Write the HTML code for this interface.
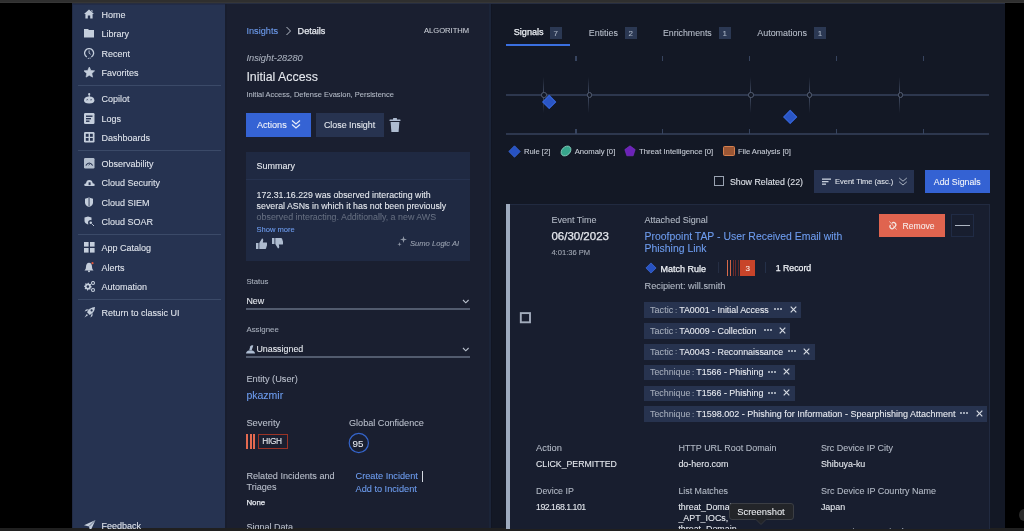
<!DOCTYPE html>
<html><head><meta charset="utf-8"><style>
html,body{margin:0;padding:0;width:1024px;height:531px;overflow:hidden;background:#000;}
body{position:relative;font-family:"Liberation Sans",sans-serif;}
.t{position:absolute;white-space:nowrap;-webkit-text-stroke:0.08px currentColor;}
.r{position:absolute;display:block;}
#w{position:absolute;left:0;top:0;width:1024px;height:531px;overflow:hidden;will-change:transform;}
</style></head><body><div id="w">
<div class="r" style="left:0px;top:0px;width:1024px;height:531px;background:#000;"></div>
<div class="r" style="left:0px;top:0px;width:1024px;height:3px;background:#2f2f2f;"></div>
<div class="r" style="left:72px;top:3px;width:933px;height:1px;background:#262d40;"></div>
<div class="r" style="left:0px;top:2px;width:1024px;height:1px;background:#363636;"></div>
<div class="r" style="left:72px;top:4px;width:153.3px;height:525px;background:#263351;"></div>
<div class="r" style="left:72px;top:4px;width:153.3px;height:1px;background:#222c48;"></div>
<div class="r" style="left:72px;top:4px;width:1px;height:525px;background:#212b45;"></div>
<div class="r" style="left:225.3px;top:4px;width:263.7px;height:525px;background:#1a1f30;"></div>
<div class="r" style="left:225.3px;top:4px;width:1.299999999999983px;height:525px;background:#181d2d;"></div>
<div class="r" style="left:489px;top:4px;width:2px;height:525px;background:#1b2438;"></div>
<div class="r" style="left:491px;top:4px;width:514px;height:525px;background:#131825;"></div>
<div class="r" style="left:491px;top:4px;width:1px;height:525px;background:#111522;"></div>
<div class="r" style="left:0px;top:528px;width:1024px;height:3px;background:#202020;"></div>
<div class="t" style="left:101.5px;top:10.20px;font-size:9px;line-height:10.80px;color:#dfe4ec;font-weight:400;font-style:normal;">Home</div>
<svg class="r" style="left:84px;top:9px;" width="12" height="12" viewBox="0 0 12 12"><path d="M5 0.5 L10 5 H8.6 V9.5 H6.2 V6.5 H3.8 V9.5 H1.4 V5 H0 Z M7.2 1.2 H8.5 V3.2 L7.2 2 Z" fill="#c4cedc"/></svg>
<div class="t" style="left:101.5px;top:29.20px;font-size:9px;line-height:10.80px;color:#dfe4ec;font-weight:400;font-style:normal;">Library</div>
<svg class="r" style="left:84px;top:28px;" width="12" height="12" viewBox="0 0 12 12"><path d="M0 1 H4 L5 2 H10 V9.5 H0 Z" fill="#c4cedc"/></svg>
<div class="t" style="left:101.5px;top:48.80px;font-size:9px;line-height:10.80px;color:#dfe4ec;font-weight:400;font-style:normal;">Recent</div>
<svg class="r" style="left:84px;top:48px;" width="12" height="12" viewBox="0 0 12 12"><path d="M2.85 9.0 A4.5 4.5 0 1 1 7.35 9.0" stroke="#c4cedc" stroke-width="1.3" fill="none"/><path d="M5.1 2.4 V5.2 L6.7 6.3" stroke="#c4cedc" stroke-width="0.9" fill="none"/><circle cx="4.3" cy="10.3" r="0.6" fill="#c4cedc"/><circle cx="6.1" cy="10.1" r="0.6" fill="#c4cedc"/></svg>
<div class="t" style="left:101.5px;top:68.00px;font-size:9px;line-height:10.80px;color:#dfe4ec;font-weight:400;font-style:normal;">Favorites</div>
<svg class="r" style="left:84px;top:67px;" width="12" height="12" viewBox="0 0 12 12"><path d="M5.30 0.00 L6.89 3.42 L10.63 3.87 L7.87 6.43 L8.59 10.13 L5.30 8.30 L2.01 10.13 L2.73 6.43 L-0.03 3.87 L3.71 3.42 Z" fill="#c4cedc" stroke="#c4cedc" stroke-width="0.6" stroke-linejoin="round"/></svg>
<div class="t" style="left:101.5px;top:93.75px;font-size:9px;line-height:10.80px;color:#dfe4ec;font-weight:400;font-style:normal;">Copilot</div>
<svg class="r" style="left:84px;top:93px;" width="12" height="12" viewBox="0 0 12 12"><circle cx="5.2" cy="1.2" r="1.1" fill="#c4cedc"/><rect x="4.7" y="1.5" width="1" height="2.5" fill="#c4cedc"/><path d="M0 7.5 Q0 3.5 5.2 3.5 Q10.4 3.5 10.4 7.5 Q10.4 10.5 5.2 10.5 Q0 10.5 0 7.5 Z" fill="#c4cedc"/><path d="M2.5 7 Q3.3 6 4.1 7 M6.3 7 Q7.1 6 7.9 7" stroke="#263351" stroke-width="0.8" fill="none"/></svg>
<div class="t" style="left:101.5px;top:113.50px;font-size:9px;line-height:10.80px;color:#dfe4ec;font-weight:400;font-style:normal;">Logs</div>
<svg class="r" style="left:84px;top:113px;" width="12" height="12" viewBox="0 0 12 12"><rect x="0" y="0" width="10.5" height="11" rx="1.2" fill="#c4cedc"/><rect x="2" y="2.5" width="6.5" height="1.4" fill="#263351"/><rect x="2" y="5" width="5" height="1.4" fill="#263351"/><rect x="2" y="7.5" width="3.5" height="1.4" fill="#263351"/></svg>
<div class="t" style="left:101.5px;top:133.00px;font-size:9px;line-height:10.80px;color:#dfe4ec;font-weight:400;font-style:normal;">Dashboards</div>
<svg class="r" style="left:84px;top:132px;" width="12" height="12" viewBox="0 0 12 12"><rect x="0" y="0" width="10.5" height="10.5" rx="1.2" fill="#c4cedc"/><rect x="1.8" y="1.8" width="2.8" height="3" fill="#263351"/><rect x="6" y="1.8" width="2.8" height="3" fill="#263351"/><rect x="1.8" y="6" width="2.8" height="2.8" fill="#263351"/><rect x="6" y="6" width="2.8" height="2.8" fill="#263351"/></svg>
<div class="t" style="left:101.5px;top:159.00px;font-size:9px;line-height:10.80px;color:#dfe4ec;font-weight:400;font-style:normal;">Observability</div>
<svg class="r" style="left:84px;top:158px;" width="12" height="12" viewBox="0 0 12 12"><rect x="0" y="0" width="10.5" height="10.5" rx="1.2" fill="#c4cedc" opacity="0.9"/><path d="M1.8 7.5 Q5.2 2.5 8.7 7.5" stroke="#263351" stroke-width="1.2" fill="none"/><path d="M4.5 7.2 L6.5 5.5" stroke="#263351" stroke-width="0.8"/></svg>
<div class="t" style="left:101.5px;top:178.25px;font-size:9px;line-height:10.80px;color:#dfe4ec;font-weight:400;font-style:normal;">Cloud Security</div>
<svg class="r" style="left:84px;top:177px;" width="12" height="12" viewBox="0 0 12 12"><path d="M1.2 9 Q0 9 0.2 7.6 Q0.6 6.3 2 6.4 Q2.4 3 5.3 3 Q8.2 3 8.7 6.2 Q10.8 6.4 10.8 8 Q10.8 9 9.6 9 Z" fill="#c4cedc"/><rect x="4.6" y="5.3" width="2" height="2.8" fill="#263351"/></svg>
<div class="t" style="left:101.5px;top:197.75px;font-size:9px;line-height:10.80px;color:#dfe4ec;font-weight:400;font-style:normal;">Cloud SIEM</div>
<svg class="r" style="left:84px;top:197px;" width="12" height="12" viewBox="0 0 12 12"><path d="M5 0.5 L9 1.8 V5.5 Q9 8.5 5 10 Q1 8.5 1 5.5 V1.8 Z" fill="#c4cedc"/><rect x="4.6" y="1" width="0.9" height="8.5" fill="#263351"/></svg>
<div class="t" style="left:101.5px;top:217.00px;font-size:9px;line-height:10.80px;color:#dfe4ec;font-weight:400;font-style:normal;">Cloud SOAR</div>
<svg class="r" style="left:84px;top:216px;" width="12" height="12" viewBox="0 0 12 12"><path d="M4 0.5 L7.5 1.6 V4.8 Q7.5 7.2 4 8.5 Q0.5 7.2 0.5 4.8 V1.6 Z" fill="#c4cedc"/><circle cx="6.8" cy="6.8" r="2" stroke="#263351" stroke-width="1.5" fill="#c4cedc"/><path d="M8.2 8.2 L10 10" stroke="#c4cedc" stroke-width="1"/></svg>
<div class="t" style="left:101.5px;top:243.25px;font-size:9px;line-height:10.80px;color:#dfe4ec;font-weight:400;font-style:normal;">App Catalog</div>
<svg class="r" style="left:84px;top:242px;" width="12" height="12" viewBox="0 0 12 12"><rect x="0" y="0" width="4.6" height="4.6" fill="#c4cedc"/><rect x="6" y="0" width="4.6" height="4.6" fill="#c4cedc"/><rect x="0" y="6" width="4.6" height="4.6" fill="#c4cedc"/><rect x="6" y="6" width="4.6" height="4.6" fill="#c4cedc"/></svg>
<div class="t" style="left:101.5px;top:262.50px;font-size:9px;line-height:10.80px;color:#dfe4ec;font-weight:400;font-style:normal;">Alerts</div>
<svg class="r" style="left:84px;top:262px;" width="12" height="12" viewBox="0 0 12 12"><path d="M5 0.8 Q8 1 8 5 Q8 7.5 9.5 8.5 H0.5 Q2 7.5 2 5 Q2 1 5 0.8 Z" fill="#c4cedc"/><circle cx="5" cy="9.3" r="1" fill="#c4cedc"/><circle cx="8.5" cy="1.2" r="1.1" fill="#e0573d"/></svg>
<div class="t" style="left:101.5px;top:282.00px;font-size:9px;line-height:10.80px;color:#dfe4ec;font-weight:400;font-style:normal;">Automation</div>
<svg class="r" style="left:84px;top:281px;" width="12" height="12" viewBox="0 0 12 12"><path d="M7.80 5.60 L7.73 6.36 L6.67 6.75 L6.39 7.27 L6.66 8.36 L6.07 8.84 L5.05 8.37 L4.49 8.54 L3.90 9.50 L3.14 9.43 L2.75 8.37 L2.23 8.09 L1.14 8.36 L0.66 7.77 L1.13 6.75 L0.96 6.19 L0.00 5.60 L0.07 4.84 L1.13 4.45 L1.41 3.93 L1.14 2.84 L1.73 2.36 L2.75 2.83 L3.31 2.66 L3.90 1.70 L4.66 1.77 L5.05 2.83 L5.57 3.11 L6.66 2.84 L7.14 3.43 L6.67 4.45 L6.84 5.01 Z" fill="#c4cedc"/><circle cx="3.9" cy="5.6" r="1.3" fill="#263351"/><circle cx="9" cy="2" r="1.5" stroke="#c4cedc" stroke-width="1.1" fill="none"/><circle cx="9" cy="9" r="1.5" stroke="#c4cedc" stroke-width="1.1" fill="none"/></svg>
<div class="t" style="left:101.5px;top:308.00px;font-size:9px;line-height:10.80px;color:#dfe4ec;font-weight:400;font-style:normal;">Return to classic UI</div>
<svg class="r" style="left:84px;top:307px;" width="12" height="12" viewBox="0 0 12 12"><path d="M11 0 Q5.5 0.3 3 5.3 L5.7 8 Q10.7 5.5 11 0 Z" fill="#c4cedc"/><circle cx="7.6" cy="3.4" r="1.1" fill="#263351"/><path d="M3.6 3.6 L0.6 4.6 L2 2.6 L5 2.3 Z M7.4 7.4 L6.4 10.4 L8.4 9 L8.7 6 Z" fill="#c4cedc"/><path d="M2.8 7 L0.5 10.5 L4 8.2 Z" fill="#c4cedc"/></svg>
<div class="t" style="left:101.5px;top:520.50px;font-size:9px;line-height:10.80px;color:#dfe4ec;font-weight:400;font-style:normal;">Feedback</div>
<svg class="r" style="left:84px;top:520px;" width="12" height="12" viewBox="0 0 12 12"><path d="M0 5.2 L11.5 0 L6.2 11.5 L5 6.5 Z" fill="#c4cedc"/><path d="M5 6.5 L11.5 0" stroke="#263351" stroke-width="0.6"/></svg>
<div class="r" style="left:78px;top:85.0px;width:143px;height:1.0px;background:#3b4a68;"></div>
<div class="r" style="left:78px;top:150.0px;width:143px;height:1.0px;background:#3b4a68;"></div>
<div class="r" style="left:78px;top:234.25px;width:143px;height:1.0px;background:#3b4a68;"></div>
<div class="r" style="left:78px;top:298.5px;width:143px;height:1.0px;background:#3b4a68;"></div>
<div class="t" style="left:246.4px;top:25.98px;font-size:9.2px;line-height:11.04px;color:#6e9df0;font-weight:400;font-style:normal;">Insights</div>
<svg class="r" style="left:285px;top:26px;" width="7" height="10" viewBox="0 0 7 10"><path d="M1.5 1 L5.5 5 L1.5 9" stroke="#b9bfca" stroke-width="1" fill="none"/></svg>
<div class="t" style="left:297.6px;top:26.04px;font-size:9.1px;line-height:10.92px;color:#e6e9ef;font-weight:400;font-style:normal;-webkit-text-stroke:0.25px currentColor;">Details</div>
<div class="t" style="left:424px;top:26.44px;font-size:7.6px;line-height:9.12px;color:#c9cdd6;font-weight:400;font-style:normal;">ALGORITHM</div>
<div class="t" style="left:246.4px;top:52.52px;font-size:9.3px;line-height:11.16px;color:#a8afbc;font-weight:400;font-style:italic;">Insight-28280</div>
<div class="t" style="left:246.4px;top:69.86px;font-size:12.4px;line-height:14.88px;color:#e6e9ef;font-weight:400;font-style:normal;">Initial Access</div>
<div class="t" style="left:246.4px;top:90.20px;font-size:7.5px;line-height:9.00px;color:#b3bac6;font-weight:400;font-style:normal;">Initial Access, Defense Evasion, Persistence</div>
<div class="r" style="left:246px;top:113px;width:65px;height:24px;background:#3563d4;"></div>
<div class="t" style="left:256.9px;top:120.44px;font-size:9.1px;line-height:10.92px;color:#f2f5fb;font-weight:400;font-style:normal;">Actions</div>
<svg class="r" style="left:291px;top:119px;" width="10" height="11" viewBox="0 0 10 11"><path d="M1 1.5 L5 5 L9 1.5 M1 5.5 L5 9 L9 5.5" stroke="#e8eefa" stroke-width="1.2" fill="none"/></svg>
<div class="r" style="left:316px;top:113px;width:67.5px;height:24px;background:#273350;"></div>
<div class="t" style="left:323.9px;top:119.86px;font-size:8.9px;line-height:10.68px;color:#e6e9ef;font-weight:400;font-style:normal;">Close Insight</div>
<svg class="r" style="left:389px;top:118px;" width="13" height="15" viewBox="0 0 13 15"><rect x="0.5" y="1.5" width="11" height="1.6" rx="0.5" fill="#aebcd0"/><rect x="4" y="0" width="4" height="2" rx="0.5" fill="#aebcd0"/><path d="M1.6 4 H10.4 L9.6 14 H2.4 Z" fill="#aebcd0"/></svg>
<div class="r" style="left:246px;top:151.5px;width:223.5px;height:109.5px;background:#1f2942;"></div>
<div class="r" style="left:246px;top:179px;width:223.5px;height:1px;background:#26324f;"></div>
<div class="t" style="left:256.4px;top:161.00px;font-size:9.0px;line-height:10.80px;color:#e6e9ef;font-weight:400;font-style:normal;">Summary</div>
<div class="t" style="left:256.6px;top:189.82px;font-size:8.8px;line-height:10.56px;color:#e6e9ef;font-weight:400;font-style:normal;">172.31.16.229 was observed interacting with</div>
<div class="t" style="left:256.6px;top:200.61px;font-size:8.82px;line-height:10.58px;color:#e6e9ef;font-weight:400;font-style:normal;">several ASNs in which it has not been previously</div>
<div class="t" style="left:256.6px;top:211.66px;font-size:8.9px;line-height:10.68px;color:#6f7889;font-weight:400;font-style:normal;">observed interacting. Additionally, a new AWS</div>
<div class="r" style="left:246px;top:214px;width:223.5px;height:8px;background:linear-gradient(rgba(31,41,66,0),rgba(31,41,66,0.35));"></div>
<div class="t" style="left:256.4px;top:225.34px;font-size:7.6px;line-height:9.12px;color:#6e9df0;font-weight:400;font-style:normal;">Show more</div>
<svg class="r" style="left:256px;top:237.8px;" width="11" height="11" viewBox="0 0 11 11"><path d="M0 5 H2.5 V11 H0 Z M3.3 5 L6 0.5 Q7.5 0.5 7.2 2.5 L6.8 4.5 H10.5 Q11.8 4.8 11.3 6.3 L10 10.5 Q9.6 11 9 11 H3.3 Z" fill="#aebcd0"/></svg>
<svg class="r" style="left:271.5px;top:237.5px;" width="11" height="11" viewBox="0 0 11 11"><path d="M0 0 H2.5 V6 H0 Z M3.3 0 H9 Q9.6 0 10 0.5 L11.3 4.7 Q11.8 6.2 10.5 6.5 H6.8 L7.2 8.5 Q7.5 10.5 6 10.5 L3.3 6 Z" fill="#aebcd0"/></svg>
<svg class="r" style="left:397px;top:236px;" width="11" height="11" viewBox="0 0 11 11"><path d="M6.5 0 L7.3 2.7 L10 3.5 L7.3 4.3 L6.5 7 L5.7 4.3 L3 3.5 L5.7 2.7 Z" fill="#8f97a6"/><path d="M2.5 6 L3 7.7 L4.7 8.2 L3 8.7 L2.5 10.4 L2 8.7 L0.3 8.2 L2 7.7 Z" fill="#8f97a6"/></svg>
<div class="t" style="left:410px;top:239.34px;font-size:7.6px;line-height:9.12px;color:#9aa2b1;font-weight:400;font-style:italic;">Sumo Logic AI</div>
<div class="t" style="left:246.4px;top:276.72px;font-size:7.8px;line-height:9.36px;color:#a8afbc;font-weight:400;font-style:normal;">Status</div>
<div class="t" style="left:246.4px;top:296.36px;font-size:8.9px;line-height:10.68px;color:#e6e9ef;font-weight:400;font-style:normal;">New</div>
<svg class="r" style="left:462px;top:299px;" width="8" height="5" viewBox="0 0 8 5"><path d="M1 1 L3.8 3.8 L6.6 1" stroke="#b9c0cc" stroke-width="1.1" fill="none"/></svg>
<div class="r" style="left:246px;top:308.2px;width:223.7px;height:1.400000000000034px;background:#525b6e;"></div>
<div class="t" style="left:246.4px;top:325.46px;font-size:7.9px;line-height:9.48px;color:#a8afbc;font-weight:400;font-style:normal;">Assignee</div>
<svg class="r" style="left:246px;top:344.5px;" width="9" height="9" viewBox="0 0 9 9"><path d="M3.2 5.2 L4.2 1.6 Q5 0 7.3 0.4 L5.6 5.4 Z" fill="#aebdd2"/><path d="M0 8.6 Q0.4 5.6 3 5.4 H6 Q8.6 5.6 9 8.6 Z" fill="#aebdd2"/></svg>
<div class="t" style="left:256.4px;top:343.96px;font-size:8.9px;line-height:10.68px;color:#e6e9ef;font-weight:400;font-style:normal;">Unassigned</div>
<svg class="r" style="left:462px;top:347px;" width="8" height="5" viewBox="0 0 8 5"><path d="M1 1 L3.8 3.8 L6.6 1" stroke="#b9c0cc" stroke-width="1.1" fill="none"/></svg>
<div class="r" style="left:246px;top:356.2px;width:223.7px;height:1.400000000000034px;background:#525b6e;"></div>
<div class="t" style="left:246.4px;top:373.75px;font-size:9.25px;line-height:11.10px;color:#b9bfcb;font-weight:400;font-style:normal;">Entity (User)</div>
<div class="t" style="left:246.4px;top:389.40px;font-size:10.5px;line-height:12.60px;color:#6e9df0;font-weight:400;font-style:normal;">pkazmir</div>
<div class="t" style="left:246.4px;top:418.19px;font-size:9.35px;line-height:11.22px;color:#b9bfcb;font-weight:400;font-style:normal;">Severity</div>
<div class="t" style="left:349px;top:418.34px;font-size:9.1px;line-height:10.92px;color:#b9bfcb;font-weight:400;font-style:normal;">Global Confidence</div>
<div class="r" style="left:246px;top:433.7px;width:2px;height:15.699999999999989px;background:#e46a50;"></div>
<div class="r" style="left:249.5px;top:433.7px;width:2.0px;height:15.699999999999989px;background:#e46a50;"></div>
<div class="r" style="left:253px;top:433.7px;width:2px;height:15.699999999999989px;background:#e46a50;"></div>
<div class="r" style="left:258px;top:433.5px;width:27.5px;height:13.5px;border:1.3px solid #9a3326;"></div>
<div class="t" style="left:262.2px;top:437.12px;font-size:8.3px;line-height:9.96px;color:#e6e9ef;font-weight:400;font-style:normal;letter-spacing:-0.3px;">HIGH</div>
<svg class="r" style="left:348px;top:432px;" width="22" height="22" viewBox="0 0 22 22"><circle cx="10.8" cy="11" r="9.6" stroke="#3565cc" stroke-width="1.2" fill="none"/></svg>
<div class="t" style="left:352.6px;top:438.02px;font-size:9.8px;line-height:11.76px;color:#e6e9ef;font-weight:400;font-style:normal;">95</div>
<div class="t" style="left:246.4px;top:470.82px;font-size:9.14px;line-height:10.97px;color:#b9bfcb;font-weight:400;font-style:normal;">Related Incidents and</div>
<div class="t" style="left:246.4px;top:482.02px;font-size:9.14px;line-height:10.97px;color:#b9bfcb;font-weight:400;font-style:normal;">Triages</div>
<div class="t" style="left:246.4px;top:498.06px;font-size:7.9px;line-height:9.48px;color:#e6e9ef;font-weight:400;font-style:normal;-webkit-text-stroke:0.25px currentColor;">None</div>
<div class="t" style="left:355.5px;top:470.78px;font-size:9.2px;line-height:11.04px;color:#6e9df0;font-weight:400;font-style:normal;">Create Incident</div>
<div class="r" style="left:422.2px;top:470.5px;width:0.9000000000000341px;height:11.0px;background:#d5dae2;"></div>
<div class="t" style="left:355.5px;top:484.38px;font-size:9.2px;line-height:11.04px;color:#6e9df0;font-weight:400;font-style:normal;">Add to Incident</div>
<div class="t" style="left:246.4px;top:521.98px;font-size:9.03px;line-height:10.84px;color:#b9bfcb;font-weight:400;font-style:normal;">Signal Data</div>
<div class="t" style="left:513.75px;top:27.44px;font-size:9.1px;line-height:10.92px;color:#eef1f6;font-weight:400;font-style:normal;-webkit-text-stroke:0.25px currentColor;">Signals</div>
<div class="r" style="left:550.3px;top:27px;width:11.900000000000091px;height:11.799999999999997px;background:#2b3853;"></div>
<div class="t" style="left:553.6px;top:28.90px;font-size:8px;line-height:9.60px;color:#a9b3c3;font-weight:400;font-style:normal;">7</div>
<div class="r" style="left:506px;top:44.2px;width:64px;height:1.7999999999999972px;background:#3a6fe0;"></div>
<div class="t" style="left:588.75px;top:28.35px;font-size:8.92px;line-height:10.70px;color:#b8bfcb;font-weight:400;font-style:normal;">Entities</div>
<div class="r" style="left:625px;top:27px;width:11.899999999999977px;height:11.799999999999997px;background:#2b3853;"></div>
<div class="t" style="left:628.6px;top:28.90px;font-size:8px;line-height:9.60px;color:#a9b3c3;font-weight:400;font-style:normal;">2</div>
<div class="t" style="left:663px;top:28.43px;font-size:8.78px;line-height:10.54px;color:#b8bfcb;font-weight:400;font-style:normal;">Enrichments</div>
<div class="r" style="left:719px;top:27px;width:11.600000000000023px;height:11.799999999999997px;background:#2b3853;"></div>
<div class="t" style="left:722.6px;top:28.90px;font-size:8px;line-height:9.60px;color:#a9b3c3;font-weight:400;font-style:normal;">1</div>
<div class="t" style="left:757.2px;top:28.32px;font-size:8.96px;line-height:10.75px;color:#b8bfcb;font-weight:400;font-style:normal;">Automations</div>
<div class="r" style="left:814.2px;top:27px;width:11.799999999999955px;height:11.799999999999997px;background:#2b3853;"></div>
<div class="t" style="left:817.8px;top:28.90px;font-size:8px;line-height:9.60px;color:#a9b3c3;font-weight:400;font-style:normal;">1</div>
<div class="r" style="left:505.7px;top:94px;width:483.8px;height:1.5999999999999943px;background:#2d374e;"></div>
<div class="r" style="left:505.7px;top:133.2px;width:483.8px;height:1.6000000000000227px;background:#2d374e;"></div>
<div class="r" style="left:575.4px;top:55.5px;width:1.2000000000000455px;height:5.5px;background:#37445f;"></div>
<div class="r" style="left:575.4px;top:128.5px;width:1.2000000000000455px;height:5.5px;background:#37445f;"></div>
<div class="r" style="left:662.0px;top:55.5px;width:1.2000000000000455px;height:5.5px;background:#37445f;"></div>
<div class="r" style="left:662.0px;top:128.5px;width:1.2000000000000455px;height:5.5px;background:#37445f;"></div>
<div class="r" style="left:748.8px;top:55.5px;width:1.2000000000000455px;height:5.5px;background:#37445f;"></div>
<div class="r" style="left:748.8px;top:128.5px;width:1.2000000000000455px;height:5.5px;background:#37445f;"></div>
<div class="r" style="left:835.9px;top:55.5px;width:1.2000000000000455px;height:5.5px;background:#37445f;"></div>
<div class="r" style="left:835.9px;top:128.5px;width:1.2000000000000455px;height:5.5px;background:#37445f;"></div>
<div class="r" style="left:923.0px;top:55.5px;width:1.2000000000000455px;height:5.5px;background:#37445f;"></div>
<div class="r" style="left:923.0px;top:128.5px;width:1.2000000000000455px;height:5.5px;background:#37445f;"></div>
<div class="r" style="left:543.1px;top:77px;width:1px;height:36px;background:linear-gradient(rgba(60,70,92,0),#3c465c 40%,#3c465c 60%,rgba(60,70,92,0));"></div>
<div class="r" style="left:541.3000000000001px;top:92.4px;width:3.4px;height:3.4px;border-radius:50%;border:0.9px solid #566075;background:#131825;"></div>
<div class="r" style="left:588.4px;top:77px;width:1px;height:36px;background:linear-gradient(rgba(60,70,92,0),#3c465c 40%,#3c465c 60%,rgba(60,70,92,0));"></div>
<div class="r" style="left:586.6px;top:92.4px;width:3.4px;height:3.4px;border-radius:50%;border:0.9px solid #566075;background:#131825;"></div>
<div class="r" style="left:750.0px;top:77px;width:1px;height:36px;background:linear-gradient(rgba(60,70,92,0),#3c465c 40%,#3c465c 60%,rgba(60,70,92,0));"></div>
<div class="r" style="left:748.2px;top:92.4px;width:3.4px;height:3.4px;border-radius:50%;border:0.9px solid #566075;background:#131825;"></div>
<div class="r" style="left:808.8px;top:77px;width:1px;height:36px;background:linear-gradient(rgba(60,70,92,0),#3c465c 40%,#3c465c 60%,rgba(60,70,92,0));"></div>
<div class="r" style="left:807.0px;top:92.4px;width:3.4px;height:3.4px;border-radius:50%;border:0.9px solid #566075;background:#131825;"></div>
<div class="r" style="left:899.3px;top:77px;width:1px;height:36px;background:linear-gradient(rgba(60,70,92,0),#3c465c 40%,#3c465c 60%,rgba(60,70,92,0));"></div>
<div class="r" style="left:897.5px;top:92.4px;width:3.4px;height:3.4px;border-radius:50%;border:0.9px solid #566075;background:#131825;"></div>
<div class="r" style="left:544.1px;top:97.4px;width:8.4px;height:8.4px;background:#2a55c4;border:0.7px solid #3563d4;transform:rotate(45deg);"></div>
<div class="r" style="left:784.6999999999999px;top:111.80000000000001px;width:8.4px;height:8.4px;background:#2a55c4;border:0.7px solid #3563d4;transform:rotate(45deg);"></div>
<svg class="r" style="left:508px;top:144.5px;" width="13" height="13" viewBox="0 0 13 13"><path d="M6.5 0.8 L12.2 6.5 L6.5 12.2 L0.8 6.5 Z" fill="#2752c2" stroke="#3d69d6" stroke-width="0.8"/></svg>
<div class="t" style="left:523.9px;top:147.30px;font-size:7.66px;line-height:9.19px;color:#c9ced8;font-weight:400;font-style:normal;">Rule [2]</div>
<svg class="r" style="left:559.5px;top:145px;" width="12" height="12" viewBox="0 0 12 12"><ellipse cx="6" cy="6" rx="5.6" ry="4.1" transform="rotate(-45 6 6)" fill="#37a58c" stroke="#8fd6c4" stroke-width="0.8"/></svg>
<div class="t" style="left:574.7px;top:147.29px;font-size:7.69px;line-height:9.23px;color:#c9ced8;font-weight:400;font-style:normal;">Anomaly [0]</div>
<svg class="r" style="left:623.8px;top:145px;" width="12" height="12" viewBox="0 0 12 12"><path d="M6 0.8 L11.2 4.6 L9.2 10.8 H2.8 L0.8 4.6 Z" fill="#6c22b8" stroke="#7e36c8" stroke-width="0.6"/></svg>
<div class="t" style="left:639px;top:147.26px;font-size:7.73px;line-height:9.28px;color:#c9ced8;font-weight:400;font-style:normal;">Threat Intelligence [0]</div>
<div class="r" style="left:723.2px;top:145.9px;width:9.6px;height:8.6px;background:#9b5634;border:0.9px solid #d57f4e;border-radius:1.5px;"></div>
<div class="t" style="left:737.9px;top:147.32px;font-size:7.63px;line-height:9.16px;color:#c9ced8;font-weight:400;font-style:normal;">File Analysis [0]</div>
<div class="r" style="left:714px;top:176px;width:8.2px;height:8.2px;border:1.4px solid #9aa3b2;"></div>
<div class="t" style="left:729.9px;top:176.60px;font-size:8.84px;line-height:10.61px;color:#dfe3ea;font-weight:400;font-style:normal;">Show Related (22)</div>
<div class="r" style="left:814.3px;top:170px;width:100.20000000000005px;height:22.80000000000001px;background:#263250;"></div>
<svg class="r" style="left:821.6px;top:178px;" width="10" height="9" viewBox="0 0 10 9"><rect x="0" y="0.5" width="9" height="1.3" fill="#c8d0dc"/><rect x="0" y="3" width="6.5" height="1.3" fill="#c8d0dc"/><rect x="0" y="5.5" width="4" height="1.3" fill="#c8d0dc"/></svg>
<div class="t" style="left:835px;top:177.20px;font-size:7.5px;line-height:9.00px;color:#dfe3ea;font-weight:400;font-style:normal;">Event Time (asc.)</div>
<svg class="r" style="left:898px;top:176px;" width="10" height="11" viewBox="0 0 10 11"><path d="M1.2 2 L5 5.2 L8.8 2 M1.2 5.8 L5 9 L8.8 5.8" stroke="#b9c1cd" stroke-width="0.9" fill="none"/></svg>
<div class="r" style="left:925px;top:170px;width:64.5px;height:22.80000000000001px;background:#3462d3;"></div>
<div class="t" style="left:933.8px;top:177.03px;font-size:8.79px;line-height:10.55px;color:#f3f6fb;font-weight:400;font-style:normal;">Add Signals</div>
<div class="r" style="left:510px;top:204px;width:480px;height:325px;background:#181e2f;"></div>
<div class="r" style="left:510px;top:203.6px;width:480px;height:1.0px;background:#212a40;"></div>
<div class="r" style="left:989px;top:204px;width:1px;height:325px;background:#212a40;"></div>
<div class="r" style="left:505.9px;top:204px;width:4.100000000000023px;height:325px;background:#9eabbf;"></div>
<svg class="r" style="left:519px;top:311px;" width="13" height="13" viewBox="0 0 13 13"><rect x="1.8" y="2.1" width="9.2" height="9.2" stroke="#a2acbc" stroke-width="1.9" fill="none"/></svg>
<div class="t" style="left:551.4px;top:214.90px;font-size:9.0px;line-height:10.80px;color:#b3bac6;font-weight:400;font-style:normal;">Event Time</div>
<div class="t" style="left:551.4px;top:230.40px;font-size:11.5px;line-height:13.80px;color:#e6e9ef;font-weight:400;font-style:normal;-webkit-text-stroke:0.25px currentColor;">06/30/2023</div>
<div class="t" style="left:551.4px;top:248.35px;font-size:7.59px;line-height:9.11px;color:#a3aab6;font-weight:400;font-style:normal;">4:01:36 PM</div>
<div class="t" style="left:644.5px;top:214.87px;font-size:9.05px;line-height:10.86px;color:#b3bac6;font-weight:400;font-style:normal;">Attached Signal</div>
<div class="t" style="left:644.5px;top:231.03px;font-size:10.45px;line-height:12.54px;color:#6e9df0;font-weight:400;font-style:normal;">Proofpoint TAP - User Received Email with</div>
<div class="t" style="left:644.5px;top:242.73px;font-size:10.45px;line-height:12.54px;color:#6e9df0;font-weight:400;font-style:normal;">Phishing Link</div>
<svg class="r" style="left:645px;top:261.5px;" width="12" height="12" viewBox="0 0 12 12"><path d="M6 0.9 L11.1 6 L6 11.1 L0.9 6 Z" fill="#2752c2" stroke="#3d69d6" stroke-width="0.8"/></svg>
<div class="t" style="left:660.5px;top:263.90px;font-size:9.0px;line-height:10.80px;color:#eef1f6;font-weight:400;font-style:normal;-webkit-text-stroke:0.25px currentColor;">Match Rule</div>
<div class="r" style="left:717.5px;top:261.7px;width:0.7999999999999545px;height:11.699999999999989px;background:#252e44;"></div>
<div class="r" style="left:727px;top:260px;width:1.2999999999999545px;height:15.800000000000011px;background:#d86a4a;"></div>
<div class="r" style="left:729.8px;top:260px;width:1.2999999999999545px;height:15.800000000000011px;background:#d06448;"></div>
<div class="r" style="left:732.5px;top:260px;width:1.2999999999999545px;height:15.800000000000011px;background:#6e2b2b;"></div>
<div class="r" style="left:734.8px;top:260px;width:1.2999999999999545px;height:15.800000000000011px;background:#6a2a2a;"></div>
<div class="r" style="left:737.6px;top:260px;width:1.2999999999999545px;height:15.800000000000011px;background:#5e2828;"></div>
<div class="r" style="left:740.2px;top:259.7px;width:15.0px;height:16.100000000000023px;background:#c8442a;"></div>
<div class="t" style="left:745.4px;top:263.70px;font-size:8px;line-height:9.60px;color:#f5e8e4;font-weight:400;font-style:normal;">3</div>
<div class="r" style="left:765px;top:261.7px;width:1px;height:11.800000000000011px;background:#243049;"></div>
<div class="t" style="left:775.7px;top:263.25px;font-size:8.75px;line-height:10.50px;color:#eef1f6;font-weight:400;font-style:normal;-webkit-text-stroke:0.25px currentColor;">1 Record</div>
<div class="t" style="left:644.5px;top:281.47px;font-size:9.22px;line-height:11.06px;color:#b3bac6;font-weight:400;font-style:normal;">Recipient: will.smith</div>
<div class="r" style="left:879.3px;top:213.8px;width:65.30000000000007px;height:23.599999999999994px;background:#e0644f;"></div>
<svg class="r" style="left:889px;top:221px;" width="8" height="9" viewBox="0 0 8 9"><path d="M3 2.2 Q4.6 0.6 6.2 2.2 Q7.6 3.8 6.2 5.4 L4.6 7 Q3 8.6 1.6 7 Q0.2 5.6 1.6 4" stroke="#f4e6e2" stroke-width="1.3" fill="none"/><path d="M0.4 0.4 L7.6 8.6" stroke="#f4e6e2" stroke-width="0.7"/></svg>
<div class="t" style="left:902.6px;top:221.34px;font-size:8.6px;line-height:10.32px;color:#f7ece9;font-weight:400;font-style:normal;">Remove</div>
<div class="r" style="left:950.9px;top:214.1px;width:21.5px;height:21.4px;border:1px solid #202b45;"></div>
<div class="r" style="left:954.5px;top:225px;width:15.799999999999955px;height:1px;background:#aeb6c2;"></div>
<div class="r" style="left:644.4px;top:302.3px;width:156.5px;height:15.5px;background:#27334f;"></div>
<div class="t" style="left:650px;top:304.85px;font-size:9.08px;line-height:10.90px;color:#a3abb9;font-weight:400;font-style:normal;">Tactic</div>
<div class="t" style="left:674.9000000000001px;top:305.50px;font-size:8px;line-height:9.60px;color:#a3abb9;font-weight:400;font-style:normal;">:</div>
<div class="t" style="left:679.2px;top:304.96px;font-size:8.9px;line-height:10.68px;color:#e8ebf1;font-weight:400;font-style:normal;">TA0001 - Initial Access</div>
<div class="r" style="left:774.0px;top:307.8px;width:2.0px;height:2.0px;background:#c9cfd9;border-radius:50%;"></div>
<div class="r" style="left:777.2px;top:307.8px;width:2.0px;height:2.0px;background:#c9cfd9;border-radius:50%;"></div>
<div class="r" style="left:780.4px;top:307.8px;width:2.0px;height:2.0px;background:#c9cfd9;border-radius:50%;"></div>
<svg class="r" style="left:789.5px;top:305.90000000000003px;" width="7" height="7" viewBox="0 0 7 7"><path d="M0.7 0.7 L6.3 6.3 M6.3 0.7 L0.7 6.3" stroke="#d5dae2" stroke-width="1.2"/></svg>
<div class="r" style="left:644.4px;top:323.2px;width:145.5px;height:15.5px;background:#27334f;"></div>
<div class="t" style="left:650px;top:325.75px;font-size:9.08px;line-height:10.90px;color:#a3abb9;font-weight:400;font-style:normal;">Tactic</div>
<div class="t" style="left:674.9000000000001px;top:326.40px;font-size:8px;line-height:9.60px;color:#a3abb9;font-weight:400;font-style:normal;">:</div>
<div class="t" style="left:679.2px;top:325.86px;font-size:8.9px;line-height:10.68px;color:#e8ebf1;font-weight:400;font-style:normal;">TA0009 - Collection</div>
<div class="r" style="left:764.0px;top:328.8px;width:2.0px;height:2.0px;background:#c9cfd9;border-radius:50%;"></div>
<div class="r" style="left:767.2px;top:328.8px;width:2.0px;height:2.0px;background:#c9cfd9;border-radius:50%;"></div>
<div class="r" style="left:770.4px;top:328.8px;width:2.0px;height:2.0px;background:#c9cfd9;border-radius:50%;"></div>
<svg class="r" style="left:778.5px;top:326.8px;" width="7" height="7" viewBox="0 0 7 7"><path d="M0.7 0.7 L6.3 6.3 M6.3 0.7 L0.7 6.3" stroke="#d5dae2" stroke-width="1.2"/></svg>
<div class="r" style="left:644.4px;top:344px;width:170.20000000000005px;height:15.5px;background:#27334f;"></div>
<div class="t" style="left:650px;top:346.55px;font-size:9.08px;line-height:10.90px;color:#a3abb9;font-weight:400;font-style:normal;">Tactic</div>
<div class="t" style="left:674.9000000000001px;top:347.20px;font-size:8px;line-height:9.60px;color:#a3abb9;font-weight:400;font-style:normal;">:</div>
<div class="t" style="left:679.2px;top:346.66px;font-size:8.9px;line-height:10.68px;color:#e8ebf1;font-weight:400;font-style:normal;">TA0043 - Reconnaissance</div>
<div class="r" style="left:788.0px;top:349.8px;width:2.0px;height:2.0px;background:#c9cfd9;border-radius:50%;"></div>
<div class="r" style="left:791.2px;top:349.8px;width:2.0px;height:2.0px;background:#c9cfd9;border-radius:50%;"></div>
<div class="r" style="left:794.4px;top:349.8px;width:2.0px;height:2.0px;background:#c9cfd9;border-radius:50%;"></div>
<svg class="r" style="left:803.2px;top:347.6px;" width="7" height="7" viewBox="0 0 7 7"><path d="M0.7 0.7 L6.3 6.3 M6.3 0.7 L0.7 6.3" stroke="#d5dae2" stroke-width="1.2"/></svg>
<div class="r" style="left:644.4px;top:364.8px;width:150.39999999999998px;height:15.5px;background:#27334f;"></div>
<div class="t" style="left:650px;top:367.48px;font-size:8.86px;line-height:10.63px;color:#a3abb9;font-weight:400;font-style:normal;">Technique</div>
<div class="t" style="left:692.0px;top:368.00px;font-size:8px;line-height:9.60px;color:#a3abb9;font-weight:400;font-style:normal;">:</div>
<div class="t" style="left:696.3px;top:367.46px;font-size:8.9px;line-height:10.68px;color:#e8ebf1;font-weight:400;font-style:normal;">T1566 - Phishing</div>
<div class="r" style="left:768.0px;top:370.8px;width:2.0px;height:2.0px;background:#c9cfd9;border-radius:50%;"></div>
<div class="r" style="left:771.2px;top:370.8px;width:2.0px;height:2.0px;background:#c9cfd9;border-radius:50%;"></div>
<div class="r" style="left:774.4px;top:370.8px;width:2.0px;height:2.0px;background:#c9cfd9;border-radius:50%;"></div>
<svg class="r" style="left:783.4px;top:368.40000000000003px;" width="7" height="7" viewBox="0 0 7 7"><path d="M0.7 0.7 L6.3 6.3 M6.3 0.7 L0.7 6.3" stroke="#d5dae2" stroke-width="1.2"/></svg>
<div class="r" style="left:644.4px;top:385.6px;width:150.39999999999998px;height:15.5px;background:#27334f;"></div>
<div class="t" style="left:650px;top:388.28px;font-size:8.86px;line-height:10.63px;color:#a3abb9;font-weight:400;font-style:normal;">Technique</div>
<div class="t" style="left:692.0px;top:388.80px;font-size:8px;line-height:9.60px;color:#a3abb9;font-weight:400;font-style:normal;">:</div>
<div class="t" style="left:696.3px;top:388.26px;font-size:8.9px;line-height:10.68px;color:#e8ebf1;font-weight:400;font-style:normal;">T1566 - Phishing</div>
<div class="r" style="left:768.0px;top:391.8px;width:2.0px;height:2.0px;background:#c9cfd9;border-radius:50%;"></div>
<div class="r" style="left:771.2px;top:391.8px;width:2.0px;height:2.0px;background:#c9cfd9;border-radius:50%;"></div>
<div class="r" style="left:774.4px;top:391.8px;width:2.0px;height:2.0px;background:#c9cfd9;border-radius:50%;"></div>
<svg class="r" style="left:783.4px;top:389.20000000000005px;" width="7" height="7" viewBox="0 0 7 7"><path d="M0.7 0.7 L6.3 6.3 M6.3 0.7 L0.7 6.3" stroke="#d5dae2" stroke-width="1.2"/></svg>
<div class="r" style="left:644.4px;top:406.3px;width:342.5px;height:15.5px;background:#27334f;"></div>
<div class="t" style="left:650px;top:408.98px;font-size:8.86px;line-height:10.63px;color:#a3abb9;font-weight:400;font-style:normal;">Technique</div>
<div class="t" style="left:692.0px;top:409.50px;font-size:8px;line-height:9.60px;color:#a3abb9;font-weight:400;font-style:normal;">:</div>
<div class="t" style="left:696.3px;top:408.90px;font-size:9.0px;line-height:10.80px;color:#e8ebf1;font-weight:400;font-style:normal;">T1598.002 - Phishing for Information - Spearphishing Attachment</div>
<div class="r" style="left:960.0px;top:411.8px;width:2.0px;height:2.0px;background:#c9cfd9;border-radius:50%;"></div>
<div class="r" style="left:963.2px;top:411.8px;width:2.0px;height:2.0px;background:#c9cfd9;border-radius:50%;"></div>
<div class="r" style="left:966.4px;top:411.8px;width:2.0px;height:2.0px;background:#c9cfd9;border-radius:50%;"></div>
<svg class="r" style="left:975.5px;top:409.90000000000003px;" width="7" height="7" viewBox="0 0 7 7"><path d="M0.7 0.7 L6.3 6.3 M6.3 0.7 L0.7 6.3" stroke="#d5dae2" stroke-width="1.2"/></svg>
<div class="t" style="left:536px;top:442.89px;font-size:9.35px;line-height:11.22px;color:#b3bac6;font-weight:400;font-style:normal;">Action</div>
<div class="t" style="left:536px;top:459.16px;font-size:8.73px;line-height:10.48px;color:#e6e9ef;font-weight:400;font-style:normal;">CLICK_PERMITTED</div>
<div class="t" style="left:536px;top:486.00px;font-size:8.83px;line-height:10.60px;color:#b3bac6;font-weight:400;font-style:normal;">Device IP</div>
<div class="t" style="left:536px;top:501.92px;font-size:8.8px;line-height:10.56px;color:#e6e9ef;font-weight:400;font-style:normal;letter-spacing:-0.5px;">192.168.1.101</div>
<div class="t" style="left:536px;top:527.22px;font-size:8.8px;line-height:10.56px;color:#b3bac6;font-weight:400;font-style:normal;">User URL</div>
<div class="t" style="left:678.4px;top:443.12px;font-size:8.97px;line-height:10.76px;color:#b3bac6;font-weight:400;font-style:normal;">HTTP URL Root Domain</div>
<div class="t" style="left:678.4px;top:459.04px;font-size:8.93px;line-height:10.72px;color:#e6e9ef;font-weight:400;font-style:normal;">do-hero.com</div>
<div class="t" style="left:678.4px;top:485.99px;font-size:8.85px;line-height:10.62px;color:#b3bac6;font-weight:400;font-style:normal;">List Matches</div>
<div class="t" style="left:678.4px;top:501.86px;font-size:8.9px;line-height:10.68px;color:#e6e9ef;font-weight:400;font-style:normal;">threat_Domain</div>
<div class="t" style="left:678.4px;top:513.36px;font-size:8.9px;line-height:10.68px;color:#e6e9ef;font-weight:400;font-style:normal;">_APT_IOCs,</div>
<div class="t" style="left:678.4px;top:523.56px;font-size:8.9px;line-height:10.68px;color:#e6e9ef;font-weight:400;font-style:normal;">threat_Domain</div>
<div class="t" style="left:820.9px;top:443.12px;font-size:8.97px;line-height:10.76px;color:#b3bac6;font-weight:400;font-style:normal;">Src Device IP City</div>
<div class="t" style="left:820.9px;top:459.06px;font-size:8.9px;line-height:10.68px;color:#e6e9ef;font-weight:400;font-style:normal;">Shibuya-ku</div>
<div class="t" style="left:820.9px;top:485.88px;font-size:9.03px;line-height:10.84px;color:#b3bac6;font-weight:400;font-style:normal;">Src Device IP Country Name</div>
<div class="t" style="left:820.9px;top:501.87px;font-size:8.88px;line-height:10.66px;color:#e6e9ef;font-weight:400;font-style:normal;">Japan</div>
<div class="t" style="left:820.9px;top:527.16px;font-size:8.9px;line-height:10.68px;color:#b3bac6;font-weight:400;font-style:normal;">Src Device IP Latitude</div>
<div class="r" style="left:728.5px;top:503.2px;width:63.2px;height:15px;background:#232529;border:0.8px solid #3b3e44;border-radius:3px;"></div>
<svg class="r" style="left:755px;top:518.5px;" width="12" height="6" viewBox="0 0 12 6"><path d="M0.5 0 L6 5.5 L11.5 0" fill="#232529" stroke="#3b3e44" stroke-width="0.8"/><rect x="0" y="-1" width="12" height="1.2" fill="#232529"/></svg>
<div class="t" style="left:737.3px;top:506.17px;font-size:9.39px;line-height:11.27px;color:#e6e8ec;font-weight:400;font-style:normal;">Screenshot</div>
<div class="r" style="left:0px;top:529px;width:1024px;height:2px;background:#202020;"></div>
<div class="r" style="left:1019px;top:509px;width:10px;height:12px;border-radius:50%;background:#2a2a2a;"></div>
</div></body></html>
